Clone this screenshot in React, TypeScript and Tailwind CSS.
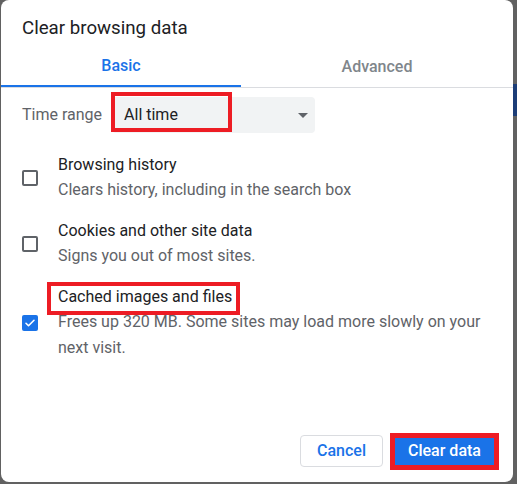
import React from "react";

const font = { fontFamily: "Roboto, 'Noto Sans', Arial, sans-serif" };

type Item = { title: string; sub: string; checked?: boolean };

const items: Item[] = [
  { title: "Browsing history", sub: "Clears history, including in the search box" },
  { title: "Cookies and other site data", sub: "Signs you out of most sites." },
  {
    title: "Cached images and files",
    sub: "Frees up 320 MB. Some sites may load more slowly on your next visit.",
    checked: true,
  },
];

const Checkbox = ({ checked }: { checked?: boolean }) =>
  checked ? (
    <div className="w-[16px] h-[16px] shrink-0 rounded-[2px] bg-[#1a73e8] flex items-center justify-center">
      <svg width="12" height="12" viewBox="0 0 24 24" fill="none">
        <path d="M4 12.5l5 5L20 6.5" stroke="white" strokeWidth="3.2" strokeLinecap="round" strokeLinejoin="round" />
      </svg>
    </div>
  ) : (
    <div className="w-[16px] h-[16px] shrink-0 rounded-[2px] border-2 border-[#5f6368]" />
  );

export default function App() {
  return (
    <div className="relative w-[517px] h-[484px] bg-[#616161] flex overflow-hidden" style={font}>
      {/* dialog */}
      <div className="ml-px w-[512px] h-[482px] bg-white rounded-[8px] flex flex-col">
        <div className="h-[46px] pl-[21px] pt-[16px] text-[18.7px] leading-[25px] text-[#202124]">
          Clear browsing data
        </div>

        {/* tabs */}
        <div className="flex border-b border-[#dadce0]">
          <div className="w-[240px] h-[41px] flex items-center justify-center border-b-2 border-[#1a73e8] text-[16px] font-medium text-[#1a73e8]">
            Basic
          </div>
          <div className="flex-1 h-[41px] flex items-center justify-center text-[16px] font-medium text-[#80868b]">
            Advanced
          </div>
        </div>

        {/* time range */}
        <div className="flex items-center pl-[21px] pt-[9px] gap-[10px]">
          <span className="text-[16px] text-[#5f6368]">Time range</span>
          <div className="w-[203px] h-[36px] bg-[#f1f3f4] rounded-[4px] flex items-center justify-between pl-[12px] pr-[7px]">
            <span className="text-[16px] text-[#202124]">All time</span>
            <svg width="10" height="5" viewBox="0 0 10 5">
              <path d="M0 0h10L5 5z" fill="#5f6368" />
            </svg>
          </div>
        </div>

        {/* checkboxes */}
        <div className="flex flex-col gap-[15px] pt-[19px] pl-[21px] pr-[22px]">
          {items.map((it) => (
            <div key={it.title} className="flex items-center gap-[20px]">
              <Checkbox checked={it.checked} />
              <div className="flex flex-col">
                <span className="text-[16px] leading-[25px] text-[#202124]">{it.title}</span>
                <span className="text-[16px] leading-[26px] text-[#5f6368]">{it.sub}</span>
              </div>
            </div>
          ))}
        </div>

        {/* buttons */}
        <div className="mt-auto flex justify-end gap-[8px] pr-[15px] pb-[15px]">
          <button className="w-[83px] h-[32px] rounded-[4px] border border-[#dadce0] bg-white text-[16px] font-medium text-[#1a73e8]">
            Cancel
          </button>
          <button className="w-[107px] h-[32px] rounded-[4px] bg-[#1a73e8] text-[16px] font-medium text-white">
            Clear data
          </button>
        </div>
      </div>

      {/* background strip at right */}
      <div className="flex flex-col pt-[84px]">
        <div className="w-[4px] h-[32px] bg-[#1c3d77]" />
      </div>

      {/* red annotation boxes */}
      <div className="absolute left-[111px] top-[92px] w-[121px] h-[40px] border-[4px] border-[#ed1c24]" />
      <div className="absolute left-[47px] top-[282px] w-[193px] h-[33px] border-[4px] border-[#ed1c24]" />
      <div className="absolute left-[390px] top-[433px] w-[109px] h-[37px] border-[5px] border-[#ed1c24]" />
    </div>
  );
}
